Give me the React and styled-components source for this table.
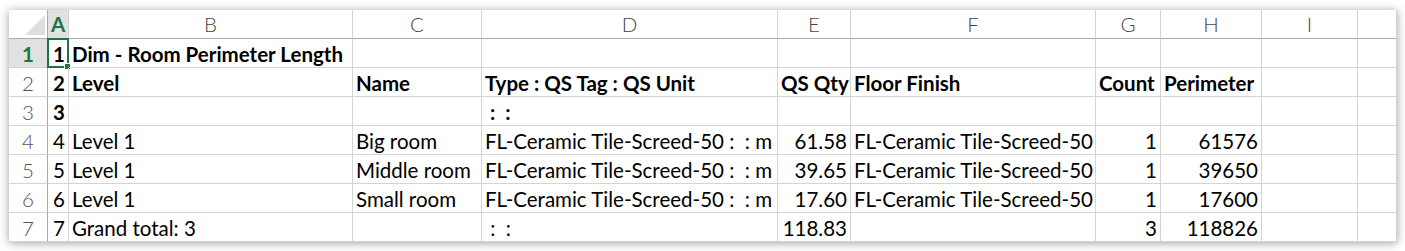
import React from "react";
import styled, { createGlobalStyle, css } from "styled-components";

const GREEN = "#217346";
const GRID = "#d4d4d4";
const HEAD_LINE = "#ababab";

const Global = createGlobalStyle`
  html, body { margin: 0; padding: 0; background: #ffffff; }
  body { font-family: Lato, "Liberation Sans", sans-serif; }
`;

const Page = styled.div`
  width: 1405px;
  height: 251px;
  padding: 10px 0 0 9px;
  box-sizing: border-box;
  overflow: hidden;
`;

const COLS = [39, 21, 284, 129, 296, 73, 245, 65, 101, 96, 39];

const Sheet = styled.div`
  display: grid;
  grid-template-columns: ${COLS.map((w) => `${w}px`).join(" ")};
  grid-auto-rows: 29px;
  width: 1388px;
  background: #fff;
  box-shadow: 0 1px 9px rgba(0, 0, 0, 0.38);
  position: relative;
`;

const Cell = styled.div`
  box-sizing: border-box;
  border-right: 1px solid ${GRID};
  border-bottom: 1px solid ${GRID};
  display: flex;
  align-items: flex-end;
  justify-content: ${(p) => (p.$align === "right" ? "flex-end" : "flex-start")};
  padding: 0 3px 0 3px;
  font-size: 20.5px;
  line-height: 25px;
  color: #000;
  font-weight: ${(p) => (p.$bold ? 700 : 400)};
  white-space: pre;
  overflow: visible;
  position: relative;
`;

const ColHead = styled.div`
  box-sizing: border-box;
  border-right: 1px solid ${GRID};
  border-bottom: 1px solid ${HEAD_LINE};
  display: flex;
  align-items: flex-end;
  justify-content: center;
  padding-bottom: 1px;
  font-size: 20.5px;
  line-height: 25px;
  font-weight: 300;
  color: #444;
  ${(p) =>
    p.$active &&
    css`
      background: #e1e1e1;
      color: ${GREEN};
      font-weight: 700;
    `}
`;

const Corner = styled.div`
  box-sizing: border-box;
  border-right: 1px solid ${HEAD_LINE};
  border-bottom: 1px solid ${HEAD_LINE};
  display: flex;
  align-items: flex-end;
  justify-content: flex-end;
  padding: 0 2px 3px 0;
`;

const Triangle = styled.div`
  width: 0;
  height: 0;
  border-left: 20px solid transparent;
  border-bottom: 20px solid #dfdfdf;
`;

const RowHead = styled.div`
  box-sizing: border-box;
  border-right: 1px solid ${HEAD_LINE};
  border-bottom: 1px solid ${GRID};
  display: flex;
  align-items: flex-end;
  justify-content: center;
  padding-bottom: 0;
  font-size: 20.5px;
  line-height: 25px;
  font-weight: 300;
  color: #555;
  ${(p) =>
    p.$active &&
    css`
      background: #e1e1e1;
      color: ${GREEN};
      font-weight: 700;
    `}
`;

const Selection = styled.div`
  position: absolute;
  left: -1px;
  top: -1px;
  right: -1px;
  bottom: -1px;
  border: 2px solid ${GREEN};
  pointer-events: none;
  &::after {
    content: "";
    position: absolute;
    right: -4px;
    bottom: -4px;
    width: 5px;
    height: 5px;
    background: ${GREEN};
    border: 1px solid #fff;
  }
`;

const LETTERS = ["A", "B", "C", "D", "E", "F", "G", "H", "I", ""];

const TYPE = "FL-Ceramic Tile-Screed-50 :  : m";
const FINISH = "FL-Ceramic Tile-Screed-50";

const ROWS = [
  { bold: true, cells: [["1", "right"], ["Dim - Room Perimeter Length"], [""], [""], [""], [""], [""], [""], [""], [""]] },
  {
    bold: true,
    cells: [["2", "right"], ["Level"], ["Name"], ["Type : QS Tag : QS Unit"], ["QS Qty"], ["Floor Finish"], ["Count"], ["Perimeter"], [""], [""]],
  },
  { bold: true, cells: [["3", "right"], [""], [""], [" :  :"], [""], [""], [""], [""], [""], [""]] },
  {
    cells: [["4", "right"], ["Level 1"], ["Big room"], [TYPE], ["61.58", "right"], [FINISH], ["1", "right"], ["61576", "right"], [""], [""]],
  },
  {
    cells: [["5", "right"], ["Level 1"], ["Middle room"], [TYPE], ["39.65", "right"], [FINISH], ["1", "right"], ["39650", "right"], [""], [""]],
  },
  {
    cells: [["6", "right"], ["Level 1"], ["Small room"], [TYPE], ["17.60", "right"], [FINISH], ["1", "right"], ["17600", "right"], [""], [""]],
  },
  {
    cells: [["7", "right"], ["Grand total: 3"], [""], [" :  :"], ["118.83", "right"], [""], ["3", "right"], ["118826", "right"], [""], [""]],
  },
];

export default function App() {
  return (
    <>
      <Global />
      <Page>
        <Sheet>
          <Corner>
            <Triangle />
          </Corner>
          {LETTERS.map((l, i) => (
            <ColHead key={i} $active={l === "A"}>
              {l}
            </ColHead>
          ))}
          {ROWS.map((row, r) => (
            <React.Fragment key={r}>
              <RowHead $active={r === 0}>{r + 1}</RowHead>
              {row.cells.map(([text, align], c) => (
                <Cell key={c} $align={align} $bold={row.bold}>
                  {text}
                  {r === 0 && c === 0 && <Selection />}
                </Cell>
              ))}
            </React.Fragment>
          ))}
        </Sheet>
      </Page>
    </>
  );
}
